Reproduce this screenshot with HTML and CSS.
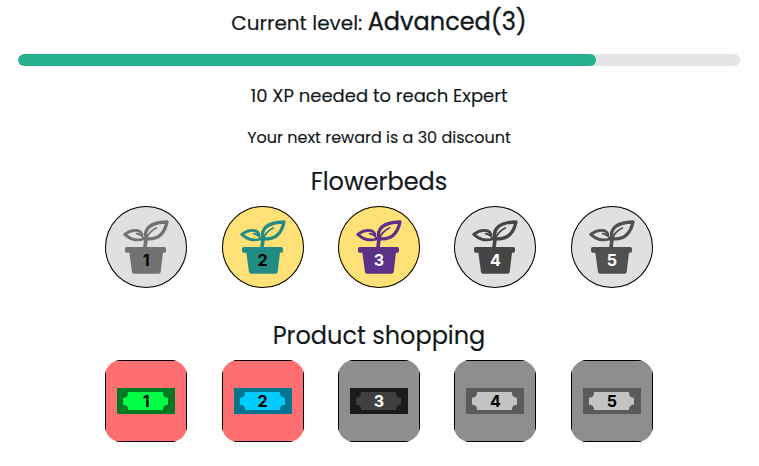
FILE: index.html
```
<!DOCTYPE html>
<html lang="en">
<head>
<meta charset="utf-8">
<title>Rewards</title>
<link rel="stylesheet" href="styles.css">
</head>
<body>
<svg class="defs" aria-hidden="true">
  <symbol id="plant" viewBox="15 18 246 246">
    <path fill="currentColor" d="M80 141H193Q198 141 198 146V153Q198 158 193 158H189L182 216Q181 221 176 221H102Q97 221 96 216L88 158H80Q75 158 75 153V146Q75 141 80 141Z"/>
    <g fill="none" stroke="currentColor" stroke-linecap="round" stroke-linejoin="round">
      <path stroke-width="11" d="M135 142Q137 128 138 116"/>
      <path stroke-width="10" d="M138 116C131 88 148 67 201 66C194 98 175 121 138 116Z"/>
      <path stroke-width="8.5" d="M132 117C105 124 91 118 74 103C95 87 121 87 126 104"/>
      <path stroke-width="5.5" d="M139 115Q148 94 169 84M132 117Q126 104 110 101"/>
    </g>
  </symbol>
  <symbol id="note" viewBox="0 0 174 78">
    <path class="note-edge" d="M0 0H174V78H0Z"/>
    <path class="note-face" d="M33 12H138V15A14 14 0 0 0 150 29H153V50H150A14 14 0 0 0 138 64V66H33V64A14 14 0 0 0 21 50H18V29H21A14 14 0 0 0 33 15Z"/>
  </symbol>
</svg>
<main class="rewards">
  <p class="level">Current level: <span class="level-name">Advanced(3)</span></p>
  <div class="progress"><div class="progress-fill"></div></div>
  <p class="needed">10 XP needed to reach Expert</p>
  <p class="next">Your next reward is a 30 discount</p>
  <h2 class="title flower-title">Flowerbeds</h2>
  <div class="badges">
    <div class="bed bed-1"><svg><use href="#plant"/></svg><b>1</b></div>
    <div class="bed bed-2"><svg><use href="#plant"/></svg><b>2</b></div>
    <div class="bed bed-3"><svg><use href="#plant"/></svg><b>3</b></div>
    <div class="bed bed-4"><svg><use href="#plant"/></svg><b>4</b></div>
    <div class="bed bed-5"><svg><use href="#plant"/></svg><b>5</b></div>
  </div>
  <h2 class="title shop-title">Product shopping</h2>
  <div class="badges">
    <div class="shop shop-1"><div class="tile"><svg><use href="#note"/></svg><b>1</b></div></div>
    <div class="shop shop-2"><div class="tile"><svg><use href="#note"/></svg><b>2</b></div></div>
    <div class="shop shop-3"><div class="tile"><svg><use href="#note"/></svg><b>3</b></div></div>
    <div class="shop shop-4"><div class="tile"><svg><use href="#note"/></svg><b>4</b></div></div>
    <div class="shop shop-5"><div class="tile"><svg><use href="#note"/></svg><b>5</b></div></div>
  </div>
</main>
</body>
</html>
```
FILE: styles.css
```
* { box-sizing: border-box; }
body {
  margin: 0;
  background: #fff;
  color: #12181b;
  font-family: Poppins, Inter, "Liberation Sans", sans-serif;
}
.defs { position: absolute; width: 0; height: 0; }
.rewards { padding: 0 19px 0 18px; text-align: center; }
p, h2 { margin: 0; font-weight: 400; white-space: nowrap; -webkit-text-stroke: 0.15px currentColor; }
.level { height: 54px; line-height: 44px; font-size: 20px; }
.level-name { font-size: 24px; -webkit-text-stroke: 0.35px currentColor; }
.progress { height: 12px; border-radius: 6px; background: #e5e5e7; overflow: hidden; }
.progress-fill { width: 80%; height: 100%; border-radius: 6px; background: #23b18d; }
.needed { margin-top: 16px; height: 28px; line-height: 28px; font-size: 18px; }
.next { margin-top: 16px; height: 24px; line-height: 24px; font-size: 16px; }
.title { height: 36px; line-height: 36px; font-size: 24px; }
.flower-title { margin-top: 14px; margin-bottom: 6px; }
.shop-title { margin-top: 30px; margin-bottom: 6px; }
.badges { display: flex; justify-content: space-between; width: 547.8px; margin: 0 auto; }
.bed, .shop { position: relative; width: 82px; height: 82px; }
.bed { border-radius: 50%; background: #e0e0e0; box-shadow: inset 0 0 0 1px #000; }
.bed svg { display: block; width: 82px; height: 82px; }
.badges b {
  position: absolute;
  left: 0;
  right: 0;
  font: 700 16px/20px Inter, sans-serif;
  color: #000;
}
.bed b { top: 44px; }
.bed-1 { color: #727272; }
.bed-2 { color: #228b84; background: #ffe177; }
.bed-3 { color: #5c3188; background: #ffe177; }
.bed-4 { color: #454545; }
.bed-5 { color: #505050; }
.bed-3 b, .bed-4 b, .bed-5 b, .shop-3 b { color: #fff; }
.shop { border-radius: 16px; overflow: hidden; }
.tile {
  display: flex;
  align-items: center;
  justify-content: center;
  height: 82px;
  border: 1px solid #000;
  background: #8e8e8e;
}
.tile svg { width: 58px; height: 26px; }
.tile b { top: 31px; }
.shop-1 .tile, .shop-2 .tile { background: #ff6f72; }
.note-edge { fill: var(--edge); }
.note-face { fill: var(--face); }
.shop-1 { --edge: #007b22; --face: #00ff44; }
.shop-2 { --edge: #007490; --face: #00ccff; }
.shop-3 { --edge: #1b1b1b; --face: #404040; }
.shop-4, .shop-5 { --edge: #5b5b5b; --face: #c3c3c3; }
```
